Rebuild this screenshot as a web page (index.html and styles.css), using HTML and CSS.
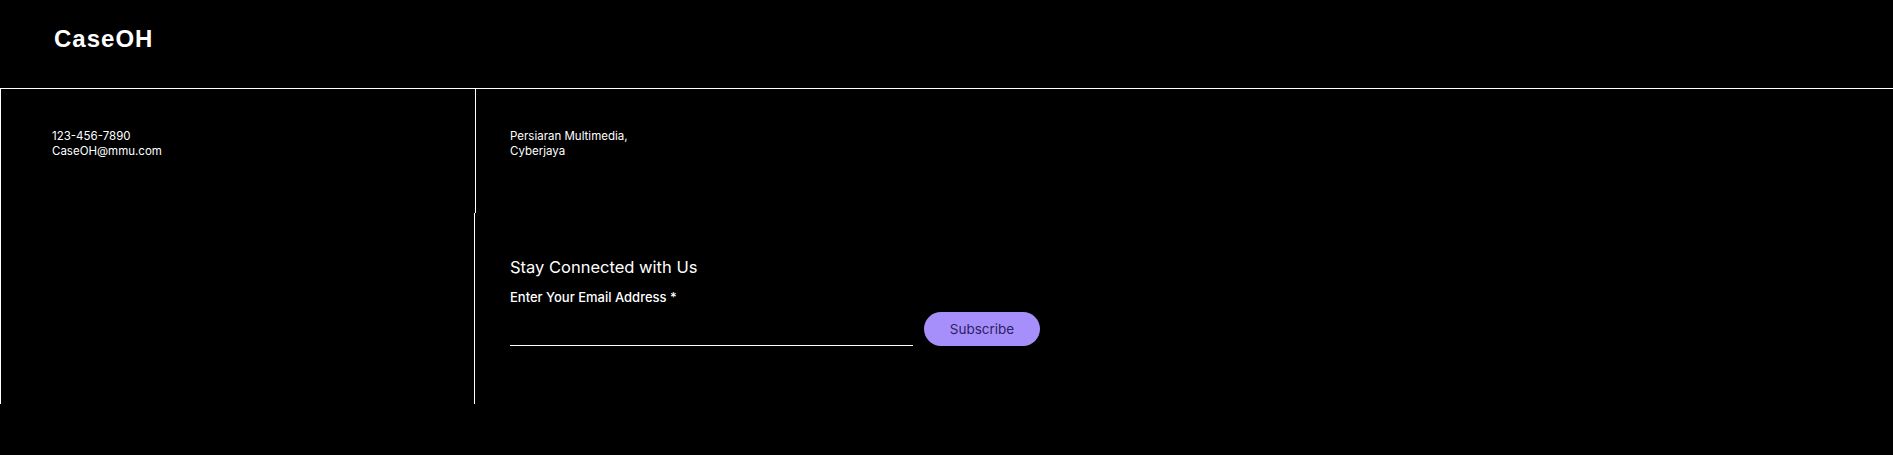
FILE: index.html
```html
<!DOCTYPE html>
<html lang="en">
<head>
<meta charset="utf-8">
<title>CaseOH</title>
<link rel="stylesheet" href="styles.css">
</head>
<body>
<header class="site-header">
  <div class="logo">CaseOH</div>
</header>
<footer class="footer">
  <div class="col-left">
    <p class="info">123-456-7890<br>CaseOH@mmu.com</p>
  </div>
  <div class="col-right">
    <div class="address-cell">
      <p class="info">Persiaran Multimedia,<br>Cyberjaya</p>
    </div>
    <div class="news-cell">
      <h2 class="news-title">Stay Connected with Us</h2>
      <form class="news-form">
        <label class="field">
          <span class="field-label">Enter Your Email Address *</span>
          <input class="field-input" type="email" aria-label="Email">
        </label>
        <button class="btn-subscribe" type="button">Subscribe</button>
      </form>
    </div>
  </div>
</footer>
</body>
</html>
```
FILE: styles.css
```css
* { box-sizing: border-box; }
html, body {
  margin: 0;
  padding: 0;
  background: #000;
  color: #fff;
  height: 455px;
  overflow: hidden;
}
body {
  font-family: "Inter", "Liberation Sans", sans-serif;
}
.site-header {
  height: 88px;
  padding: 27px 0 0 54px;
}
.logo {
  font-family: "Liberation Sans", Arial, sans-serif;
  font-weight: 700;
  font-size: 24px;
  line-height: 24px;
  letter-spacing: 1px;
}
.footer {
  display: flex;
  border-top: 1px solid #fff;
  height: 316px;
}
.col-left {
  width: 475px;
  flex: none;
  border-left: 1px solid #fff;
  padding: 40px 0 0 51px;
}
.info {
  margin: 0;
  font-size: 11.5px;
  line-height: 15px;
}
.col-right {
  flex: 1;
  display: flex;
  flex-direction: column;
}
.address-cell {
  height: 124px;
  border-left: 1px solid #fff;
  padding: 40px 0 0 34px;
}
.news-cell {
  flex: 1;
  margin-left: -1px;
  border-left: 1px solid #fff;
  padding: 44px 0 0 35px;
}
.news-title {
  margin: 0;
  font-weight: 400;
  font-size: 16.5px;
  line-height: 20px;
}
.news-form {
  display: flex;
  align-items: flex-end;
  gap: 11px;
  margin-top: 12px;
}
.field {
  display: flex;
  flex-direction: column;
  width: 403px;
}
.field-label {
  font-size: 13px;
  font-weight: 500;
  line-height: 16px;
}
.field-input {
  margin-top: 10px;
  height: 31px;
  background: transparent;
  border: none;
  border-bottom: 1px solid #fff;
  color: #fff;
  outline: none;
  padding: 0;
}
.btn-subscribe {
  width: 116px;
  height: 34px;
  border: none;
  border-radius: 17px;
  background: #a78ffb;
  color: #2a2166;
  font-family: "Inter", "Liberation Sans", sans-serif;
  font-size: 13.5px;
  padding: 0;
}
```
